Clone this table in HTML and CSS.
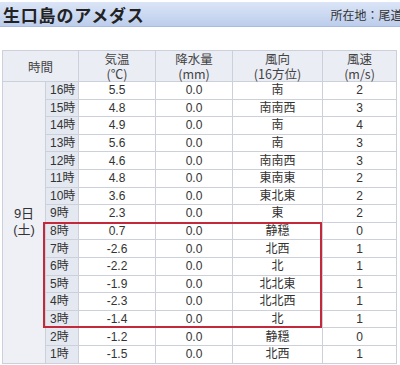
FILE: index.html
```html
<!DOCTYPE html>
<html lang="ja">
<head>
<meta charset="utf-8">
<link rel="stylesheet" href="styles.css">
</head>
<body>
<div class="titlebar">
  <h1 class="title">生口島のアメダス</h1>
  <span class="location">所在地：尾道市</span>
</div>
<div class="tablewrap">
<table class="amedas">
  <colgroup>
    <col class="c-date"><col class="c-hour"><col class="c-temp"><col class="c-rain"><col class="c-dir"><col class="c-speed">
  </colgroup>
  <thead>
    <tr><th colspan="2">時間</th><th>気温<br>(℃)</th><th>降水量<br>(mm)</th><th>風向<br>(16方位)</th><th>風速<br>(m/s)</th></tr>
  </thead>
  <tbody>
    <tr><td class="date" rowspan="16">9日<br>(土)</td><td class="hour">16時</td><td>5.5</td><td>0.0</td><td>南</td><td>2</td></tr>
    <tr><td class="hour">15時</td><td>4.8</td><td>0.0</td><td>南南西</td><td>3</td></tr>
    <tr><td class="hour">14時</td><td>4.9</td><td>0.0</td><td>南</td><td>4</td></tr>
    <tr><td class="hour">13時</td><td>5.6</td><td>0.0</td><td>南</td><td>3</td></tr>
    <tr><td class="hour">12時</td><td>4.6</td><td>0.0</td><td>南南西</td><td>3</td></tr>
    <tr><td class="hour">11時</td><td>4.8</td><td>0.0</td><td>東南東</td><td>2</td></tr>
    <tr><td class="hour">10時</td><td>3.6</td><td>0.0</td><td>東北東</td><td>2</td></tr>
    <tr><td class="hour">9時</td><td>2.3</td><td>0.0</td><td>東</td><td>2</td></tr>
    <tr><td class="hour">8時</td><td>0.7</td><td>0.0</td><td>静穏</td><td>0</td></tr>
    <tr><td class="hour">7時</td><td>-2.6</td><td>0.0</td><td>北西</td><td>1</td></tr>
    <tr><td class="hour">6時</td><td>-2.2</td><td>0.0</td><td>北</td><td>1</td></tr>
    <tr><td class="hour">5時</td><td>-1.9</td><td>0.0</td><td>北北東</td><td>1</td></tr>
    <tr><td class="hour">4時</td><td>-2.3</td><td>0.0</td><td>北北西</td><td>1</td></tr>
    <tr><td class="hour">3時</td><td>-1.4</td><td>0.0</td><td>北</td><td>1</td></tr>
    <tr><td class="hour">2時</td><td>-1.2</td><td>0.0</td><td>静穏</td><td>0</td></tr>
    <tr><td class="hour">1時</td><td>-1.5</td><td>0.0</td><td>北西</td><td>1</td></tr>
  </tbody>
</table>
<div class="highlight"></div>
</div>
</body>
</html>
```
FILE: styles.css
```css
html, body {
  margin: 0;
  padding: 0;
  overflow: hidden;
  background: #ffffff;
}
body {
  width: 400px;
  height: 365px;
  font-family: "Liberation Sans", "Noto Sans CJK JP", sans-serif;
  color: #333333;
}
.titlebar {
  display: flex;
  align-items: center;
  width: 440px;
  height: 24px;
  margin-top: 2px;
  background: linear-gradient(#dbe5f7, #bccdec);
  border-bottom: 1px solid #a9bbe0;
}
.title {
  margin: 0 0 0 3px;
  font-size: 17px;
  font-weight: bold;
  font-family: "Noto Sans CJK JP", sans-serif;
  color: #222222;
  letter-spacing: 0.8px;
}
.location {
  margin-left: 186px;
  font-size: 12px;
  font-family: "Noto Sans CJK JP", sans-serif;
  color: #333333;
  white-space: nowrap;
}
.tablewrap {
  position: relative;
  margin: 23px 0 0 2px;
  width: 394px;
}
.amedas {
  border-collapse: collapse;
  table-layout: fixed;
  width: 394px;
  font-size: 12px;
}
.c-date { width: 43px; }
.c-hour { width: 33px; }
.c-temp { width: 77px; }
.c-rain { width: 77px; }
.c-dir { width: 90px; }
.c-speed { width: 74px; }
.amedas th, .amedas td {
  border: 1px solid #cbd0da;
  padding: 0;
  text-align: center;
  font-weight: normal;
}
.amedas th {
  height: 30px;
  background: #eaedf4;
  font-size: 12.5px;
  line-height: 15px;
  font-family: "Noto Sans CJK JP", sans-serif;
  color: #444444;
}
.amedas td {
  height: 16.6px;
  line-height: 14px;
  color: #333333;
}
.amedas td.date {
  background: #eef0f6;
  font-size: 13px;
  line-height: 16px;
  font-family: "Liberation Sans", "Noto Sans CJK JP", sans-serif;
}
.amedas td.hour {
  background: #e4e8f0;
  text-align: left;
  padding-left: 4px;
}
.highlight {
  position: absolute;
  left: 41px;
  top: 172px;
  width: 275px;
  height: 102px;
  border: 2px solid #c22a3b;
  pointer-events: none;
}
```
